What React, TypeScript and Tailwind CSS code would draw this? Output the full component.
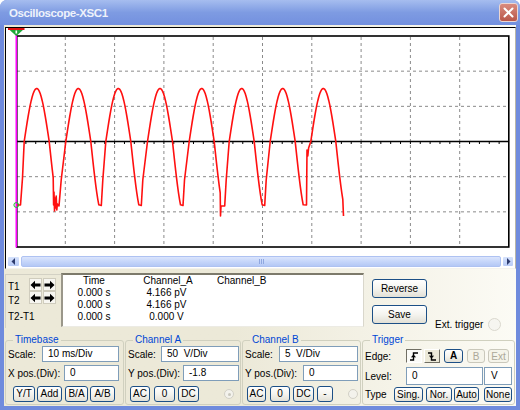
import React from "react";

const PEAKS = [36.7, 78.3, 118.3, 160, 201.7, 241.7, 282.7, 323.3];
const Z = 141.5;

function wavePath() {
  const pts: [number, number][] = [
    [17, 205],
    [20.5, 205],
    [22.5, 178],
  ];
  PEAKS.forEach((p, k) => {
    for (let x = p - 12.5; x <= p + 12.51; x += 1) {
      pts.push([x, Z - 53 * Math.cos((Math.PI * (x - p)) / 25)]);
    }
    const f = p + 12.5;
    const down = (n: number) => {
      for (let d = 1; d <= n; d++) pts.push([f + d, Z + 75 * Math.sin((Math.PI * d) / 25)]);
    };
    if (k === PEAKS.length - 1) {
      down(7);
      pts.push([343.5, 216]);
      return;
    }
    const r = PEAKS[k + 1] - 12.5;
    if (k === 0) {
      down(4);
      pts.push([f + 4.4, 205], [f + 4.8, 192], [f + 5.3, 211], [f + 5.8, 198], [f + 6.4, 208], [f + 7, 196], [f + 7.6, 210], [f + 8.2, 204], [f + 9.8, 206]);
    } else if (k === 4) {
      down(6);
      pts.push([f + 6.3, 216], [f + 6.8, 206], [f + 10.5, 206]);
    } else if (k === 6) {
      down(8);
      pts.push([f + 11.3, 205], [f + 11.8, 150], [f + 12.6, 156], [f + 13.4, 148]);
      pts.push([r, Z]);
      return;
    } else {
      down(8);
      pts.push([f + 10.5, 205.5]);
    }
    pts.push([f + 12, 180]);
    pts.push([r, Z]);
  });
  return pts.map(([x, y], i) => `${i ? "L" : "M"}${x.toFixed(1)} ${y.toFixed(1)}`).join(" ");
}

function Scope() {
  const vx = Array.from({ length: 9 }, (_, i) => 16 + (i + 1) * 49.3);
  const hy = [1, 2, 4, 5].map((j) => 36 + j * 35.17);
  const ticks = Array.from({ length: 49 }, (_, i) => 16 + (i + 1) * 9.86);
  return (
    <svg width="509" height="228" viewBox="0 0 509 228" className="block">
      <g transform="translate(-6,-28)">
        {vx.map((x) => (
          <line key={x} x1={x} y1={37} x2={x} y2={247} stroke="#8a8a8a" strokeWidth="1" strokeDasharray="3 3" />
        ))}
        {hy.map((y) => (
          <line key={y} x1={17} y1={y} x2={509} y2={y} stroke="#8a8a8a" strokeWidth="1" strokeDasharray="3 3" />
        ))}
        <line x1={16} y1={Z} x2={509} y2={Z} stroke="#000" strokeWidth="1.3" />
        {ticks.map((x) => (
          <line key={x} x1={x} y1={Z} x2={x} y2={Z + 2.5} stroke="#000" strokeWidth="1" />
        ))}
        <rect x={16.8} y={36} width={492} height={211} fill="none" stroke="#000" strokeWidth="1.6" />
        <path d={wavePath()} fill="none" stroke="#ff1010" strokeWidth="1.6" strokeLinejoin="round" />
        <line x1={16.3} y1={33} x2={16.3} y2={247.5} stroke="#ff00ff" strokeWidth="1.6" />
        <circle cx={16.3} cy={205} r={2.4} fill="none" stroke="#19c02c" strokeWidth="1" />
        <polygon points="8.5,29 24,29 16.3,36" fill="#1fa83a" />
        <line x1={8} y1={29} x2={24.5} y2={29} stroke="#e01010" strokeWidth="2" />
        <rect x={15.5} y={30.5} width={1.6} height={3} fill="#ffffff" />
      </g>
    </svg>
  );
}

function ScrollBar() {
  return (
    <div className="flex h-[11px] mx-[1px] gap-[1px]">
      <div className="w-[13px] h-full rounded-[2px] bg-linear-to-b from-[#d6e2fc] to-[#b8cbf6] border border-white flex items-center justify-center">
        <svg width="5" height="7" viewBox="0 0 5 7">
          <polygon points="4,0 4,7 0.5,3.5" fill="#2d3b6e" />
        </svg>
      </div>
      <div className="flex-1 h-full rounded-[2px] bg-linear-to-b from-[#dbe5fc] via-[#c6d6fa] to-[#b4c8f5] border border-[#aec2f2] flex items-center justify-center">
        <div className="flex gap-[1px]">
          <div className="w-[1px] h-[5px] bg-[#8fa7e0]" />
          <div className="w-[1px] h-[5px] bg-[#8fa7e0]" />
          <div className="w-[1px] h-[5px] bg-[#8fa7e0]" />
        </div>
      </div>
      <div className="w-[12px] h-full rounded-[2px] bg-linear-to-b from-[#d6e2fc] to-[#b8cbf6] border border-white flex items-center justify-center">
        <svg width="5" height="7" viewBox="0 0 5 7">
          <polygon points="1,0 1,7 4.5,3.5" fill="#2d3b6e" />
        </svg>
      </div>
    </div>
  );
}

function ArrowBtn({ dir }: { dir: "l" | "r" }) {
  return (
    <div className="w-[13px] h-[13px] bg-[#f7f6f1] border border-[#cfccbd] flex items-center justify-center">
      <svg width="11" height="10" viewBox="0 0 11 10">
        <path
          d={dir === "l" ? "M0.5 5 L5 0.8 V3.6 H10.5 V6.4 H5 V9.2 Z" : "M10.5 5 L6 0.8 V3.6 H0.5 V6.4 H6 V9.2 Z"}
          fill="#000"
        />
      </svg>
    </div>
  );
}

function Btn({ children, className = "" }: { children: React.ReactNode; className?: string }) {
  return (
    <div
      className={`h-full rounded-[3px] border border-[#1c4f86] bg-linear-to-b from-white via-[#f5f4ef] to-[#e2e0d6] flex items-center justify-center text-[10px] leading-none text-black ${className}`}
    >
      {children}
    </div>
  );
}

function Field({ children, className = "" }: { children: React.ReactNode; className?: string }) {
  return (
    <div className={`h-full bg-white border border-[#7f9db9] flex items-center pl-[5px] text-[10px] leading-none text-black ${className}`}>
      {children}
    </div>
  );
}

function Radio({ dot = false }: { dot?: boolean }) {
  return (
    <div className="w-[10px] h-[10px] rounded-full border border-[#d2d0c6] bg-[#f3f2ec] flex items-center justify-center">
      {dot && <div className="w-[3px] h-[3px] rounded-full bg-[#c9c7bd]" />}
    </div>
  );
}

function Group({ title, className, children }: { title: string; className: string; children: React.ReactNode }) {
  return (
    <fieldset className={`h-[71px] border border-[#d0d0bf] rounded-[3px] pl-[2px] ${className}`}>
      <legend className="ml-[5px] px-[2px] text-[10px] leading-[12px] text-[#0046d5]">{title}</legend>
      {children}
    </fieldset>
  );
}

function EdgeIcon({ rising }: { rising: boolean }) {
  return (
    <svg width="10" height="9" viewBox="0 0 10 9">
      <path d={rising ? "M1 8 H4.5 V1 H9" : "M1 1 H4.5 V8 H9"} fill="none" stroke="#000" strokeWidth="1.4" />
      <path d={rising ? "M2.6 5.4 L4.5 3.4 L6.4 5.4" : "M2.6 3.6 L4.5 5.6 L6.4 3.6"} fill="none" stroke="#000" strokeWidth="1.2" />
    </svg>
  );
}

export default function App() {
  return (
    <div className="w-[520px] h-[410px] bg-white overflow-hidden font-['Liberation_Sans',Arial,sans-serif]">
      <div className="w-full h-full flex flex-col rounded-t-[7px] bg-[#6f8bdd] overflow-hidden">
        {/* title bar */}
        <div className="h-[25px] shrink-0 flex items-center bg-linear-to-b from-[#a6bdef] via-[#7e9be2] to-[#7390df]">
          <span className="pl-[9px] pt-[2px] text-[11.5px] font-bold tracking-[-0.4px] text-[#eef2fb]">Oscilloscope-XSC1</span>
          <div className="ml-auto mr-[2px] w-[19px] h-[19px] rounded-[3px] border border-[#ecd6d2] bg-linear-to-b from-[#d98b7f] to-[#b9574a] flex items-center justify-center">
            <svg width="11" height="11" viewBox="0 0 11 11">
              <path d="M1.5 1.5 L9.5 9.5 M9.5 1.5 L1.5 9.5" stroke="#fff" strokeWidth="2" strokeLinecap="round" />
            </svg>
          </div>
        </div>

        {/* client area */}
        <div className="flex-1 mx-[4px] mb-[4px] flex flex-col bg-linear-to-r from-[#ece9d8] from-45% to-[#fcfbf5] text-[10px] text-black">
          {/* scope screen */}
          <div className="mt-[2px] ml-[1px] w-[511px] h-[242px] shrink-0 border border-t-black border-l-black border-r-[#b9b6a6] border-b-[#f4f3ee] bg-white">
            <Scope />
            <ScrollBar />
          </div>

          {/* cursor / readout panel */}
          <div className="h-[65px] shrink-0 flex">
            <div className="ml-[1px] mt-[5px] w-[56px] h-[54px] border-t border-l border-[#d3d1c4] pl-[2px] flex flex-col">
              <div className="mt-[3px] h-[13px] flex items-center">
                <span className="w-[21px] translate-y-[2px]">T1</span>
                <ArrowBtn dir="l" />
                <div className="w-[1px]" />
                <ArrowBtn dir="r" />
              </div>
              <div className="h-[13px] flex items-center">
                <span className="w-[21px] translate-y-[2.5px]">T2</span>
                <ArrowBtn dir="l" />
                <div className="w-[1px]" />
                <ArrowBtn dir="r" />
              </div>
              <div className="mt-[7px] leading-[12px]">T2-T1</div>
            </div>

            <div className="mt-[4px] w-[303px] h-[54px] bg-white border-t-2 border-l-2 border-t-[#7d7a6b] border-l-[#9a978a] border-r border-b border-r-[#d9d7cc] border-b-[#ecebe4] flex leading-[12px]">
              <div className="w-[62px] flex flex-col items-center">
                <span>Time</span>
                <span>0.000 s</span>
                <span>0.000 s</span>
                <span>0.000 s</span>
              </div>
              <div className="w-[86px] flex flex-col items-center">
                <span>Channel_A</span>
                <span className="pr-[3px]">4.166 pV</span>
                <span className="pr-[3px]">4.166 pV</span>
                <span className="pr-[3px]">0.000 V</span>
              </div>
              <div className="pl-[6px]">Channel_B</div>
            </div>

            <div className="ml-[8px] mt-[10px] flex flex-col gap-[7px]">
              <div className="h-[19px]">
                <Btn className="w-[55px] text-[10.5px]">Reverse</Btn>
              </div>
              <div className="h-[19px]">
                <Btn className="w-[55px] text-[10.5px]">Save</Btn>
              </div>
            </div>

            <div className="ml-[8px] mt-[48px] h-[14px] flex items-center">
              <span>Ext. trigger</span>
              <div className="ml-[5px] w-[13px] h-[13px] rounded-full border border-[#dad8ce] bg-[#f6f5f0]" />
            </div>
          </div>

          {/* control groups */}
          <div className="flex">
            <Group title="Timebase" className="ml-[1px] w-[119px]">
              <div className="h-[16px] flex items-center">
                <span className="w-[34px]">Scale:</span>
                <Field className="w-[77px]">10 ms/Div</Field>
              </div>
              <div className="mt-[3px] h-[16px] flex items-center">
                <span className="w-[56px]">X pos.(Div):</span>
                <Field className="w-[55px]">0</Field>
              </div>
              <div className="mt-[5px] h-[16px] flex">
                <Btn className="ml-[5px] w-[22px]">Y/T</Btn>
                <Btn className="ml-[2px] w-[25px]">Add</Btn>
                <Btn className="ml-[3px] w-[23px]">B/A</Btn>
                <Btn className="ml-[2px] w-[25px]">A/B</Btn>
              </div>
            </Group>

            <Group title="Channel A" className="ml-[1px] w-[116px]">
              <div className="h-[16px] flex items-center">
                <span className="w-[33px]">Scale:</span>
                <Field className="w-[78px]">50&nbsp;&nbsp;V/Div</Field>
              </div>
              <div className="mt-[3px] h-[16px] flex items-center">
                <span className="w-[55px]">Y pos.(Div):</span>
                <Field className="w-[56px]">-1.8</Field>
              </div>
              <div className="mt-[5px] h-[16px] flex items-center">
                <Btn className="ml-[2px] w-[20px]">AC</Btn>
                <Btn className="ml-[4px] w-[21px]">0</Btn>
                <Btn className="ml-[3px] w-[21px]">DC</Btn>
                <div className="ml-[25px]">
                  <Radio dot />
                </div>
              </div>
            </Group>

            <Group title="Channel B" className="ml-[1px] w-[119px]">
              <div className="h-[16px] flex items-center">
                <span className="w-[34px]">Scale:</span>
                <Field className="w-[79px]">5&nbsp;&nbsp;V/Div</Field>
              </div>
              <div className="mt-[3px] h-[16px] flex items-center">
                <span className="w-[58px]">Y pos.(Div):</span>
                <Field className="w-[55px]">0</Field>
              </div>
              <div className="mt-[5px] h-[16px] flex items-center">
                <Btn className="ml-[2px] w-[19px]">AC</Btn>
                <Btn className="ml-[4px] w-[20px]">0</Btn>
                <Btn className="ml-[3px] w-[21px]">DC</Btn>
                <Btn className="ml-[3px] w-[16px]">-</Btn>
                <div className="ml-[15px]">
                  <Radio />
                </div>
              </div>
            </Group>

            <Group title="Trigger" className="ml-[1px] w-[153px]">
              <div className="mt-[3px] h-[14px] flex items-center">
                <span className="w-[41px]">Edge:</span>
                <div className="w-[16px] h-full border border-t-[#716f64] border-l-[#716f64] border-r-white border-b-white bg-[#fbfbf8] flex items-center justify-center">
                  <EdgeIcon rising />
                </div>
                <div className="ml-[2px] w-[16px] h-full border border-t-white border-l-white border-r-[#716f64] border-b-[#716f64] bg-[#ece9d8] flex items-center justify-center">
                  <EdgeIcon rising={false} />
                </div>
                <Btn className="ml-[4px] w-[19px] font-bold border-[1.5px]">A</Btn>
                <div className="ml-[4px] w-[18px] h-full rounded-[3px] border border-[#cac8bb] bg-[#f5f4ea] text-[#aca899] flex items-center justify-center">B</div>
                <div className="ml-[3px] w-[21px] h-full rounded-[3px] border border-[#cac8bb] bg-[#f5f4ea] text-[#aca899] flex items-center justify-center">Ext</div>
              </div>
              <div className="mt-[4px] h-[18px] flex items-center">
                <span className="w-[41px]">Level:</span>
                <Field className="w-[77px] pl-[4px]">0</Field>
                <Field className="ml-[1px] w-[28px] pl-[6px]">V</Field>
              </div>
              <div className="mt-[2px] h-[15px] flex items-center">
                <span className="w-[29px]">Type</span>
                <Btn className="w-[29px]">Sing.</Btn>
                <Btn className="ml-[3px] w-[26px]">Nor.</Btn>
                <Btn className="ml-[2px] w-[25px]">Auto</Btn>
                <Btn className="ml-[5px] w-[28px] from-[#e6e4d9] via-[#e2e0d4] to-[#dcdacd]">None</Btn>
              </div>
            </Group>
          </div>
        </div>
      </div>
    </div>
  );
}
